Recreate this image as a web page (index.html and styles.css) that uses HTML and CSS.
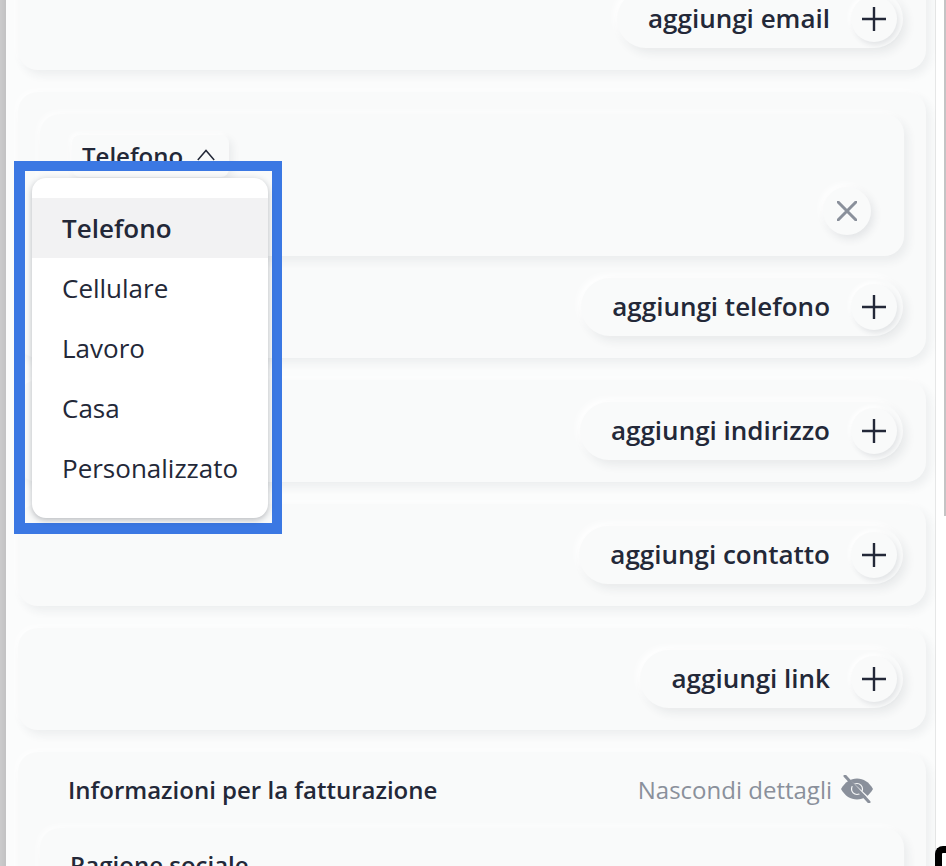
FILE: index.html
```html
<!DOCTYPE html>
<html lang="it">
<head>
  <meta charset="UTF-8">
  <meta name="viewport" content="width=device-width, initial-scale=1.0">
  <title>Contatti</title>
  <link rel="stylesheet" href="styles.css">
</head>
<body>
  <div class="page">
    <div class="side-edge"></div>

    <main class="main">
      <section class="card card-first">
        <div class="card-actions">
          <button class="add-button">
            <span class="add-label">aggiungi email</span>
            <span class="add-icon"><svg viewBox="0 0 24 24" width="24" height="24"><path d="M12 0.5V23.500M0.5 12H23.500"/></svg></span>
          </button>
        </div>
      </section>

      <section class="card">
        <div class="inner-card phone-entry">
          <button class="type-select">
            <span>Telefono</span>
            <svg viewBox="0 0 18 12" width="18" height="12"><path d="M0.800 11L9 1.500L17.200 11"/></svg>
          </button>
          <div class="entry-row">
            <button class="remove-button"><svg viewBox="0 0 20 20" width="20" height="20"><path d="M1 1L19 19M19 1L1 19"/></svg></button>
          </div>
        </div>
        <div class="card-actions">
          <button class="add-button">
            <span class="add-label">aggiungi telefono</span>
            <span class="add-icon"><svg viewBox="0 0 24 24" width="24" height="24"><path d="M12 0.5V23.500M0.5 12H23.500"/></svg></span>
          </button>
        </div>
      </section>

      <section class="card">
        <div class="card-actions">
          <button class="add-button">
            <span class="add-label">aggiungi indirizzo</span>
            <span class="add-icon"><svg viewBox="0 0 24 24" width="24" height="24"><path d="M12 0.5V23.500M0.5 12H23.500"/></svg></span>
          </button>
        </div>
      </section>

      <section class="card">
        <div class="card-actions">
          <button class="add-button">
            <span class="add-label">aggiungi contatto</span>
            <span class="add-icon"><svg viewBox="0 0 24 24" width="24" height="24"><path d="M12 0.5V23.500M0.5 12H23.500"/></svg></span>
          </button>
        </div>
      </section>

      <section class="card">
        <div class="card-actions">
          <button class="add-button">
            <span class="add-label">aggiungi link</span>
            <span class="add-icon"><svg viewBox="0 0 24 24" width="24" height="24"><path d="M12 0.5V23.500M0.5 12H23.500"/></svg></span>
          </button>
        </div>
      </section>

      <section class="card">
        <div class="billing-header">
          <h2 class="billing-title">Informazioni per la fatturazione</h2>
          <button class="details-toggle">
            <span>Nascondi dettagli</span>
            <svg viewBox="0 0 32 28" width="32" height="28">
              <path class="eye" d="M0 14C4 7 9.500 3.500 16 3.500S28 7 32 14C28 21 22.500 24.500 16 24.500S4 21 0 14Z"/>
              <circle class="eye-cut" cx="16" cy="14" r="5.500"/>
              <path class="eye-gap" d="M7 4L30 25"/>
              <path class="eye-slash" d="M4 1L28 27"/>
            </svg>
          </button>
        </div>
        <div class="inner-card billing-fields">
          <div class="field-label">Ragione sociale</div>
        </div>
      </section>
    </main>

    <div class="scroll-rail"><div class="scroll-thumb"></div></div>
  </div>

  <div class="highlight-box"></div>
  <ul class="type-menu">
    <li class="type-option selected">Telefono</li>
    <li class="type-option">Cellulare</li>
    <li class="type-option">Lavoro</li>
    <li class="type-option">Casa</li>
    <li class="type-option">Personalizzato</li>
  </ul>
  <div class="corner-badge"></div>
</body>
</html>
```

FILE: styles.css
```css
:root {
  --page-color: #fbfcfc;
  --card-color: #f9fafa;
  --text-color: #232838;
  --muted-color: #8a909b;
  --card-shadow: 4px 5px 10px rgba(40, 50, 70, 0.07), -2px -2px 6px rgba(255, 255, 255, 0.8);
}

* {
  box-sizing: border-box;
}

html, body {
  height: 866px;
}

body {
  margin: 0;
  overflow: hidden;
  position: relative;
  font-family: "Open Sans", "Noto Sans", Arial, sans-serif;
  font-size: 26px;
  color: var(--text-color);
  background: #ffffff;
}

button {
  font: inherit;
  color: inherit;
  border: none;
  background: none;
  padding: 0;
}

.page {
  display: flex;
  height: 866px;
}

.side-edge {
  width: 6px;
  flex-shrink: 0;
  background: linear-gradient(to right, #cbcbcc, #c2c2c3);
}

.main {
  flex: 1;
  padding: 0 9px 0 12px;
  background: var(--page-color);
  display: flex;
  flex-direction: column;
  gap: 22px;
  border-right: 1px solid #e6e7e7;
}

.card {
  flex-shrink: 0;
  padding: 22px;
  display: flex;
  flex-direction: column;
  gap: 22px;
  background: var(--card-color);
  border-radius: 20px;
  box-shadow: var(--card-shadow);
}

.card-first {
  margin-top: -32px;
}

.card-actions {
  display: flex;
  justify-content: flex-end;
  padding-right: 1px;
}

.add-button {
  height: 58px;
  padding: 0 6px 0 31px;
  display: flex;
  align-items: center;
  gap: 21px;
  font-weight: 600;
  background: var(--card-color);
  border-radius: 29px;
  box-shadow: 4px 5px 10px rgba(40, 50, 70, 0.08), -3px -3px 7px #ffffff;
}

.add-label {
  position: relative;
  top: -1px;
}

.add-icon {
  width: 46px;
  height: 46px;
  display: flex;
  align-items: center;
  justify-content: center;
  border-radius: 50%;
  background: var(--card-color);
  box-shadow: 2px 3px 5px rgba(40, 50, 70, 0.1), -2px -2px 4px #ffffff;
}

.add-icon path {
  fill: none;
  stroke: var(--text-color);
  stroke-width: 2.4;
  stroke-linecap: round;
}

.inner-card {
  background: var(--card-color);
  border-radius: 20px;
  box-shadow: var(--card-shadow);
}

.phone-entry {
  height: 142px;
  padding: 21px 33px 21px 32px;
  display: flex;
  flex-direction: column;
  gap: 10px;
}

.type-select {
  align-self: flex-start;
  height: 42px;
  width: 157px;
  padding: 0 10px 2px;
  display: flex;
  align-items: center;
  gap: 14px;
  font-size: 24px;
  font-weight: 600;
  background: var(--card-color);
  border-radius: 8px;
  box-shadow: 3px 4px 8px rgba(40, 50, 70, 0.08), -2px -2px 5px #ffffff;
}

.type-select svg path {
  fill: none;
  stroke: var(--text-color);
  stroke-width: 1.500;
}

.entry-row {
  display: flex;
  justify-content: flex-end;
}

.remove-button {
  width: 48px;
  height: 48px;
  display: flex;
  align-items: center;
  justify-content: center;
  background: var(--card-color);
  border-radius: 50%;
  box-shadow: 3px 4px 8px rgba(40, 50, 70, 0.1), -3px -3px 6px #ffffff;
}

.remove-button path {
  fill: none;
  stroke: var(--muted-color);
  stroke-width: 3;
  stroke-linecap: round;
}

.billing-header {
  height: 32px;
  padding: 0 31px 2px 28px;
  display: flex;
  align-items: center;
  justify-content: space-between;
}

.billing-title {
  margin: 0;
  font-size: 24px;
  font-weight: 600;
}

.details-toggle {
  display: flex;
  align-items: center;
  gap: 9px;
  font-size: 24px;
  color: var(--muted-color);
}

.eye {
  fill: var(--muted-color);
}

.eye-cut {
  fill: var(--muted-color);
  stroke: var(--card-color);
  stroke-width: 1.200;
}

.eye-gap {
  fill: none;
  stroke: var(--card-color);
  stroke-width: 1.500;
}

.eye-slash {
  fill: none;
  stroke: var(--muted-color);
  stroke-width: 3;
  stroke-linecap: round;
}

.billing-fields {
  height: 120px;
  padding: 20px 30px;
}

.field-label {
  font-size: 24px;
  font-weight: 600;
  line-height: 34px;
}

.scroll-rail {
  width: 10px;
  flex-shrink: 0;
  padding-left: 8px;
  background: #ffffff;
}

.scroll-thumb {
  width: 2px;
  height: 516px;
  background: #c4c4c5;
}

/* open dropdown, sits on top of the cards */
.highlight-box {
  position: absolute;
  left: 14px;
  top: 161px;
  width: 268px;
  height: 373px;
  border: 10px solid #3b78e3;
  border-left-width: 11px;
  border-bottom-width: 11px;
}

.type-menu {
  position: absolute;
  left: 32px;
  top: 178px;
  width: 236px;
  margin: 0;
  padding: 20px 0;
  list-style: none;
  background: #ffffff;
  border-radius: 14px;
  box-shadow: 0 2px 6px rgba(30, 35, 50, 0.3);
}

.type-option {
  height: 60px;
  padding-left: 30px;
  display: flex;
  align-items: center;
}

.type-option.selected {
  font-weight: 600;
  background: #f2f2f3;
}

.corner-badge {
  position: absolute;
  left: 935px;
  top: 846px;
  width: 20px;
  height: 30px;
  border: solid #000000;
  border-width: 7px 0 0 7px;
  border-radius: 8px 0 0 0;
  background: #ffffff;
}
```
